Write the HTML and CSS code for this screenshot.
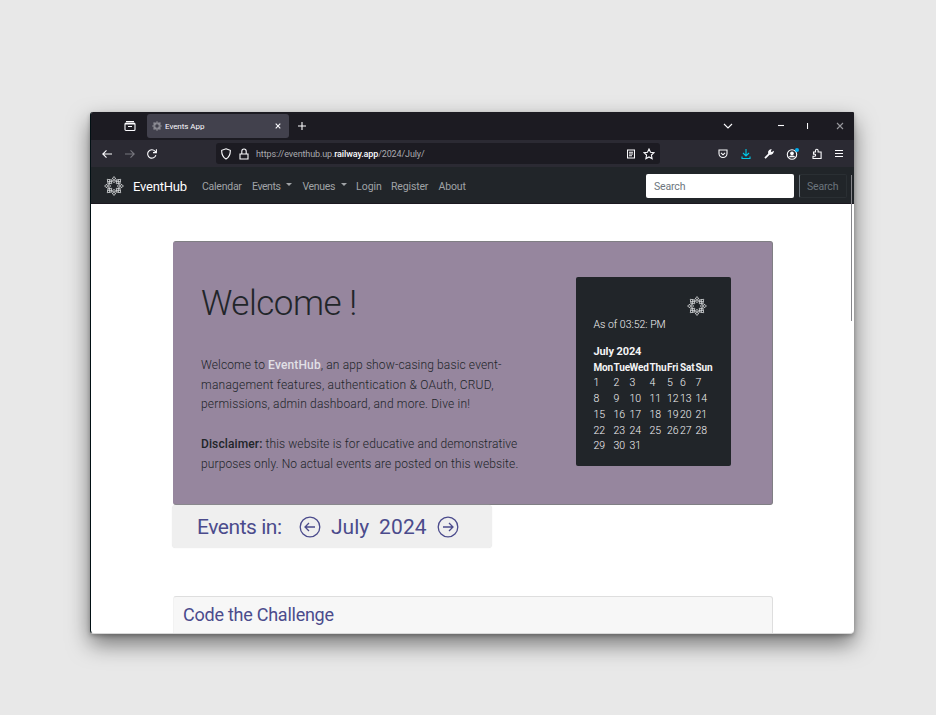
FILE: index.html
```html
<!DOCTYPE html>
<html lang="en">
<head>
<meta charset="utf-8">
<title>Events App</title>
<link rel="stylesheet" href="styles.css">
</head>
<body>
<svg class="defs" width="0" height="0" aria-hidden="true">
  <symbol id="rosette" viewBox="0 0 20 20">
    <g fill="none" stroke="currentColor" stroke-width=".7">
      <path id="petal" d="M10 .5 12.300 3.800 10 6.800 7.700 3.800ZM8.300 2.200 11.500 5.300M11.700 2.200 8.500 5.300"/>
      <use href="#petal" transform="rotate(45 10 10)"/>
      <use href="#petal" transform="rotate(90 10 10)"/>
      <use href="#petal" transform="rotate(135 10 10)"/>
      <use href="#petal" transform="rotate(180 10 10)"/>
      <use href="#petal" transform="rotate(225 10 10)"/>
      <use href="#petal" transform="rotate(270 10 10)"/>
      <use href="#petal" transform="rotate(315 10 10)"/>
    </g>
  </symbol>
</svg>
<div class="window">
  <div class="tabbar">
    <svg class="icon view" width="12" height="12" viewBox="0 0 12 12"><path d="M2 1.500h8M1 4h10v5.500a1 1 0 0 1-1 1H2a1 1 0 0 1-1-1ZM1 4l1-1h8l1 1M4 6.500h4"/></svg>
    <div class="tab">
      <svg class="fav" width="10" height="10"><use href="#rosette"/></svg>
      <span class="tab-title">Events App</span>
      <svg class="icon tab-x" width="6" height="6" viewBox="0 0 6 6"><path d="M.7.7l4.600 4.600M5.300.7.7 5.300"/></svg>
    </div>
    <svg class="icon plus" width="8" height="8" viewBox="0 0 8 8"><path d="M4 0v8M0 4h8"/></svg>
    <svg class="icon chevron" width="10" height="6" viewBox="0 0 10 6"><path d="M1 1l4 4 4-4"/></svg>
    <svg class="icon min" width="6" height="8" viewBox="0 0 6 8"><path d="M0 3.500h6"/></svg>
    <svg class="icon max" width="2" height="8" viewBox="0 0 2 8"><path d="M.5 1v6"/></svg>
    <svg class="icon close" width="8" height="8" viewBox="0 0 8 8"><path d="M1 1l6 6M7 1 1 7"/></svg>
  </div>
  <div class="toolbar">
    <svg class="icon back" width="10" height="10" viewBox="0 0 10 10"><path d="M10 5H.8M4.500 1.300.8 5l3.700 3.700"/></svg>
    <svg class="icon fwd" width="10" height="10" viewBox="0 0 10 10"><path d="M0 5h9.200M5.500 1.300 9.200 5 5.500 8.700"/></svg>
    <svg class="icon reload" width="10" height="10" viewBox="0 0 10 10"><path d="M8.900 6.200A4.200 4.200 0 1 1 8 2.100L9.300 3.400M9.400.3v3.300H6"/></svg>
    <div class="urlbar">
      <svg class="icon shield" width="10" height="12" viewBox="0 0 10 12"><path d="M5 .8 9.300 2.300c.2 4-.9 6.800-4.300 8.700C1.600 9.100.5 6.300.7 2.300Z"/></svg>
      <svg class="icon lock" width="10" height="12" viewBox="0 0 10 12"><path d="M1 6h8v5H1ZM2.800 6V3.200a2.200 2.200 0 0 1 4.400 0V6"/></svg>
      <span class="url">https://eventhub.up.<b>railway.app</b>/2024/July/</span>
      <svg class="icon reader" width="8" height="10" viewBox="0 0 8 10"><path d="M.5 1h7v8h-7ZM2 3.300h4M2 5h4M2 6.700h3"/></svg>
      <svg class="icon star" width="12" height="12" viewBox="0 0 12 12"><path d="M6 1l1.500 3.200 3.500.4-2.600 2.400.7 3.600L6 8.900l-3.100 1.700.7-3.600L1 4.600l3.500-.4Z"/></svg>
    </div>
    <div class="tools">
      <svg class="icon" width="10" height="10" viewBox="0 0 10 10"><path d="M1 1h8v3.500a4 4 0 0 1-8 0ZM3 3.800l2 2 2-2"/></svg>
      <svg class="icon dl" width="10" height="10" viewBox="0 0 10 10"><path d="M5 0v6.500M2 4l3 3 3-3M1 7.500v2h8v-2"/></svg>
      <svg class="icon" width="10" height="10" viewBox="0 0 10 10"><path d="M1 9.200 5.500 4.700" stroke-width="1.700"/><path d="M6.800.8c-2.200.6-2.500 2.500-1.800 4 1.600.8 3.700.2 4.200-2L7.500 3.800 6.200 2.500Z" fill="currentColor"/></svg>
      <svg class="icon" width="13" height="12" viewBox="0 0 13 12"><circle cx="6" cy="6.500" r="4.700"/><circle cx="6" cy="5.300" r="1.300" fill="currentColor"/><path d="M3.700 8.800c.5-1 4.100-1 4.600 0Z" fill="currentColor"/><circle class="dot" cx="11" cy="2" r="2"/></svg>
      <svg class="icon" width="10" height="12" viewBox="0 0 10 12"><path d="M1.500 4h2V2.500a1.200 1.200 0 0 1 2.600 0V4h3v6.500H1V8.300h1.500a1.100 1.100 0 0 0 0-2.200H1.500Z"/></svg>
      <svg class="icon" width="8" height="8" viewBox="0 0 8 8"><path d="M0 .500h8M0 3.500h8M0 6.500h8"/></svg>
    </div>
  </div>
  <nav class="navbar">
    <svg class="logo" width="20" height="20"><use href="#rosette"/></svg>
    <a class="brand">EventHub</a>
    <a class="link calendar">Calendar</a>
    <a class="link events">Events<i class="caret"></i></a>
    <a class="link venues">Venues<i class="caret"></i></a>
    <a class="link login">Login</a>
    <a class="link register">Register</a>
    <a class="link about">About</a>
    <span class="field">Search</span>
    <span class="search-btn">Search</span>
  </nav>
  <main class="page">
    <section class="hero">
      <div class="intro">
        <h1>Welcome !</h1>
        <p><span class="l1">Welcome to <strong class="hub">EventHub</strong>, an app show-casing basic event-</span><br><span class="l2">management features, authentication &amp; OAuth, CRUD,</span><br><span class="l3">permissions, admin dashboard, and more. Dive in!</span></p>
        <p><span class="l4"><strong>Disclaimer:</strong> this website is for educative and demonstrative</span><br><span class="l5">purposes only. No actual events are posted on this website.</span></p>
      </div>
      <aside class="calendar-card">
        <svg class="card-logo" width="20" height="20"><use href="#rosette"/></svg>
        <div class="asof">As of 03:52: PM</div>
        <div class="month">July 2024</div>
        <div class="days">
          <b>Mon</b><b>Tue</b><b>Wed</b><b>Thu</b><b>Fri</b><b>Sat</b><b>Sun</b>
          <span>1</span><span>2</span><span>3</span><span>4</span><span>5</span><span>6</span><span>7</span>
          <span>8</span><span>9</span><span>10</span><span>11</span><span>12</span><span>13</span><span>14</span>
          <span>15</span><span>16</span><span>17</span><span>18</span><span>19</span><span>20</span><span>21</span>
          <span>22</span><span>23</span><span>24</span><span>25</span><span>26</span><span>27</span><span>28</span>
          <span>29</span><span>30</span><span>31</span>
        </div>
      </aside>
    </section>
    <section class="period">
      <span class="label">Events in:</span>
      <svg width="22" height="22" viewBox="0 0 22 22"><circle cx="11" cy="11" r="9.800"/><path d="M16 11H6M10 7l-4 4 4 4"/></svg>
      <span class="mon">July</span>
      <span class="yr">2024</span>
      <svg width="22" height="22" viewBox="0 0 22 22"><circle cx="11" cy="11" r="9.800"/><path d="M6 11h10M12 7l4 4-4 4"/></svg>
    </section>
    <section class="event"><h2>Code the Challenge</h2></section>
  </main>
  <div class="scrollbar"></div>
</div>
</body>
</html>
```
FILE: styles.css
```css
* { box-sizing: border-box; }
body {
  margin: 0;
  height: 715px;
  padding: 112px 0 0 90px;
  background: #e8e8e8;
  overflow: hidden;
  font-family: Roboto, "Liberation Sans", sans-serif;
  font-weight: 300;
  white-space: nowrap;
}
.defs { position: absolute; }
svg { display: block; flex: none; }
.window {
  position: relative;
  display: flex;
  flex-direction: column;
  width: 764px;
  height: 522px;
  border-left: 1px solid #021014;
  border-bottom: 1px solid #d8d8d8;
  border-radius: 3px 2px 4px 4px;
  background: #fff;
  box-shadow: 0 10px 22px rgba(0,0,0,.5), 0 2px 4px rgba(0,0,0,.25);
}
.icon { fill: none; stroke: currentColor; stroke-width: 1.1; color: #fbfbfe; }

.tabbar {
  display: flex;
  align-items: center;
  height: 28px;
  background: #1c1b22;
  border-radius: 2px 1px 0 0;
}
.view { margin-left: 33px; }
.tab {
  display: flex;
  align-items: center;
  width: 142px;
  height: 24px;
  margin-left: 11px;
  padding: 0 8px 0 5px;
  border-radius: 3px;
  background: #42414d;
  color: #fbfbfe;
  font-size: 8px;
  font-weight: 400;
  letter-spacing: -.05px;
}
.tab-title { margin-top: 1px; }
.fav { margin-right: 3px; color: #c4c4c8; }
.tab-x { margin-left: auto; }
.plus { margin-left: 9px; }
.chevron { margin-left: 417px; }
.min { margin-left: 45px; }
.max { margin-left: 23px; }
.close { margin-left: 27px; color: #98989d; }

.toolbar {
  display: flex;
  align-items: center;
  height: 27px;
  background: #2b2a33;
}
.back { margin-left: 10.500px; }
.fwd { margin-left: 13px; color: #77767e; }
.reload { margin-left: 12.500px; }
.urlbar {
  display: flex;
  align-items: center;
  width: 444px;
  height: 21px;
  margin-left: 59px;
  padding: 0 5px;
  border-radius: 3px;
  background: #1c1b22;
}
.lock { margin-left: 8px; }
.url { margin: 1px 0 0 7px; color: #a9a9ae; font-size: 9px; letter-spacing: -.12px; font-weight: 400; }
.url b { color: #fbfbfe; font-weight: 500; }
.reader { margin-left: auto; }
.star { margin-left: 8px; }
.tools {
  display: flex;
  align-items: center;
  justify-content: space-between;
  width: 125px;
  margin-left: 58px;
}
.dl { color: #00c8e8; }
.dot { fill: #00aef0; stroke: none; }

.navbar {
  display: flex;
  align-items: center;
  height: 37px;
  padding: 1px 0 0 13px;
  background: #212529;
  border-bottom: 1px solid #1b1820;
}
.logo, .card-logo { color: #e6e8ea; }
.brand { width: 59px; margin: 1px 10px 0 9px; color: #fff; font-size: 13px; letter-spacing: -.2px; font-weight: 400; }
.link { display: flex; align-items: center; margin-top: 1px; color: #a0a3a6; font-size: 10.500px; font-weight: 400; }
.calendar { width: 50px; letter-spacing: -.25px; }
.events { width: 50.500px; letter-spacing: -.45px; }
.venues { width: 53.500px; letter-spacing: -.35px; }
.login { width: 35px; }
.register { width: 47.500px; letter-spacing: -.15px; }
.about { width: 27px; letter-spacing: -.15px; }
.caret { margin: -4px 0 0 5.500px; border: 3px solid transparent; border-top-color: #a0a3a6; border-bottom: 0; }
.field, .search-btn {
  display: flex;
  align-items: center;
  height: 24px;
  padding-top: 1px;
  border-radius: 2px;
  font-size: 10.500px;
  font-weight: 400;
  letter-spacing: -.15px;
  color: #6c757d;
}
.field { width: 148px; margin-left: 180.500px; padding-left: 8px; background: #fff; }
.search-btn { width: 48px; margin-left: 5px; padding-left: 7px; border: 1px solid #2a2f33; border-left-color: #6c757d; }

.page { flex: 1; overflow: hidden; padding: 37px 0 0 81px; border-radius: 0 0 4px 4px; }
.hero {
  display: flex;
  width: 600px;
  height: 264px;
  margin-left: 1px;
  border: 1px solid #807f84;
  border-left-color: #96869e;
  border-radius: 3px;
  background: #96869e;
}
.intro { width: 402px; padding: 37px 0 0 27px; color: #212529; }
h1 { margin: 0 0 31px; height: 46px; font-size: 35px; line-height: 50px; font-weight: 300; letter-spacing: -.5px; }
.intro p { margin: 0 0 20px; font-size: 12px; line-height: 19.700px; }
.l1 { letter-spacing: .14px; }
.l2 { letter-spacing: .24px; }
.l3 { letter-spacing: .18px; }
.l4 { letter-spacing: .11px; }
.l5 { letter-spacing: .12px; }
.intro strong { font-weight: 500; }
.intro .hub { color: #e1e0e6; }
.calendar-card {
  width: 155px;
  height: 189px;
  margin-top: 35px;
  padding: 19px 0 0 17.500px;
  border-radius: 2px;
  background: #212529;
  color: #f4f4f5;
  font-size: 10.500px;
}
.card-logo { margin-left: 93px; }
.asof { margin-top: 2px; height: 14px; line-height: 14px; }
.month { margin-top: 11px; height: 16.500px; line-height: 18px; font-size: 11px; font-weight: 700; letter-spacing: -.1px; }
.days {
  display: grid;
  grid-template-columns: 20px 16px 20px 17.500px 13px 15.500px 19px;
  grid-auto-rows: 15.800px;
  line-height: 15.800px;
}
.days b { font-size: 10px; font-weight: 700; letter-spacing: -.15px; }

.period {
  display: flex;
  align-items: center;
  width: 320px;
  height: 43px;
  padding-left: 25px;
  border-radius: 4px;
  background: #efefef;
  box-shadow: 0 0 1px #ddd;
  color: #4b4b8c;
  font-size: 21px;
  font-weight: 400;
}
.period svg { fill: none; stroke: currentColor; stroke-width: 1.300; }
.label { width: 102px; letter-spacing: -.45px; }
.mon { width: 48px; margin-left: 10px; }
.yr { width: 49px; margin-right: 9px; letter-spacing: .15px; }
.event {
  width: 600px;
  height: 80px;
  margin: 48px 0 0 1px;
  padding: 6px 9px;
  border: 1px solid #dedede;
  border-left-color: #f2f2f2;
  border-radius: 3px;
  background: #f7f7f7;
}
h2 { margin: 0; color: #4b4b8c; font-size: 18px; line-height: 24px; font-weight: 400; letter-spacing: -.25px; }
.scrollbar { position: absolute; right: 2px; top: 63px; width: 1px; height: 146px; background: #85858a; }
```
